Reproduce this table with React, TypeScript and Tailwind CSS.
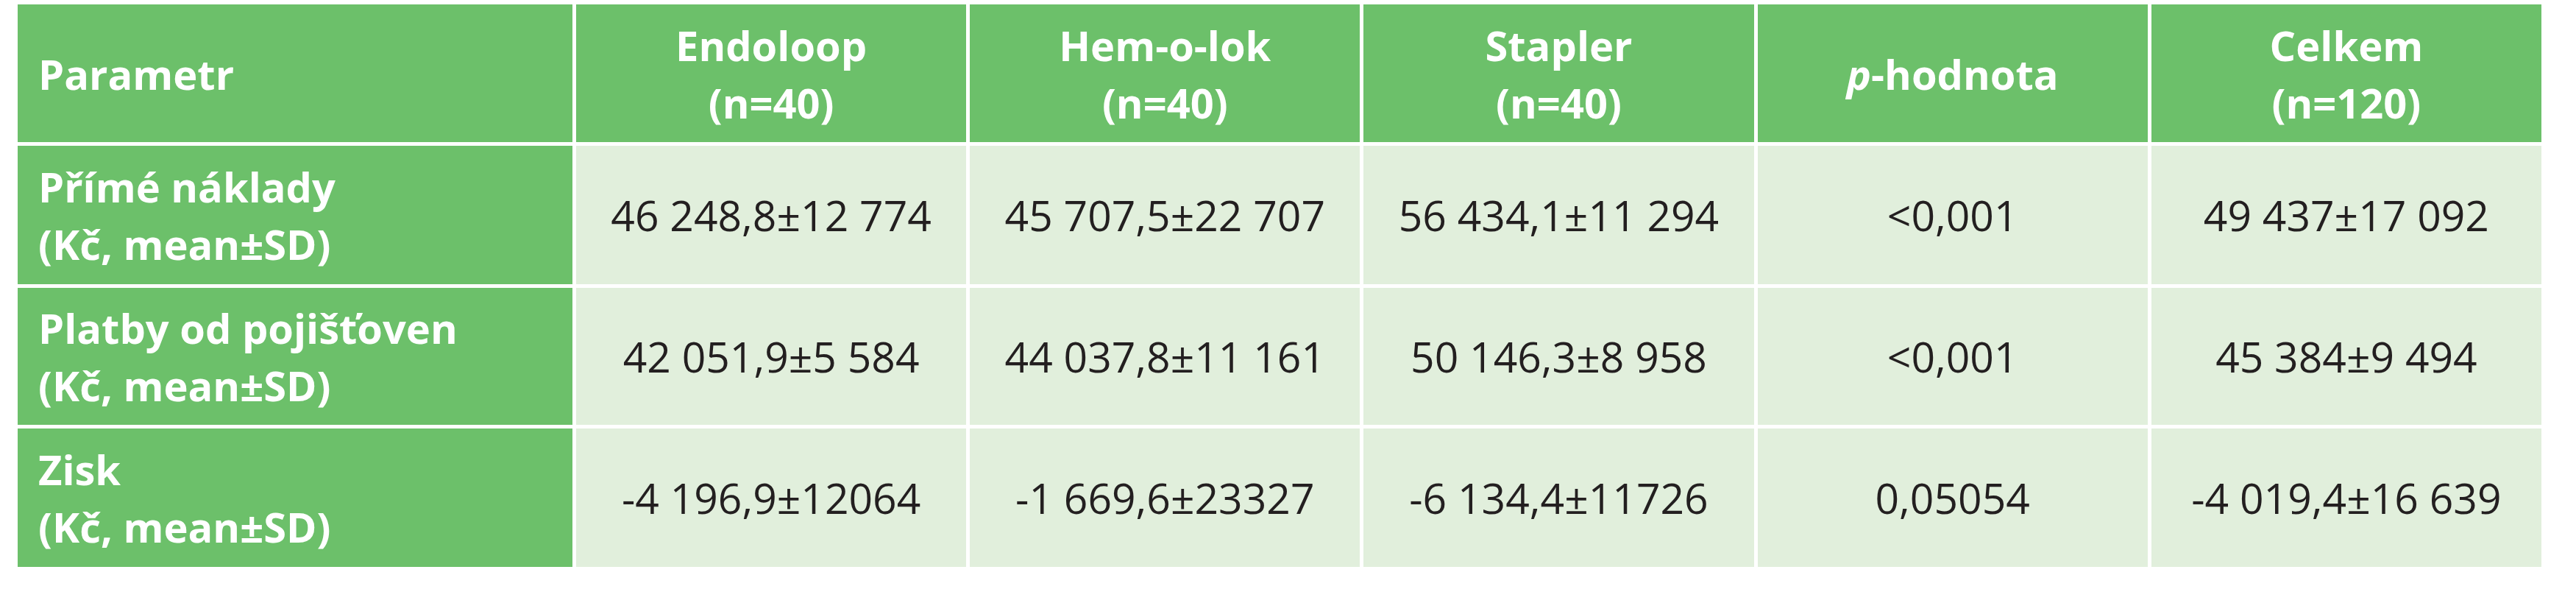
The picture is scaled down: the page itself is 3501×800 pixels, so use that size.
const headers: { title: React.ReactNode; sub?: string }[] = [
  { title: 'Endoloop', sub: '(n=40)' },
  { title: 'Hem-o-lok', sub: '(n=40)' },
  { title: 'Stapler', sub: '(n=40)' },
  {
    title: (
      <>
        <i>p</i>-hodnota
      </>
    ),
  },
  { title: 'Celkem', sub: '(n=120)' },
];

const rows = [
  {
    label: 'Přímé náklady',
    values: ['46 248,8±12 774', '45 707,5±22 707', '56 434,1±11 294', '<0,001', '49 437±17 092'],
  },
  {
    label: 'Platby od pojišťoven',
    values: ['42 051,9±5 584', '44 037,8±11 161', '50 146,3±8 958', '<0,001', '45 384±9 494'],
  },
  {
    label: 'Zisk',
    values: ['-4 196,9±12064', '-1 669,6±23327', '-6 134,4±11726', '0,05054', '-4 019,4±16 639'],
  },
];

export default function App() {
  return (
    <div className="h-[800px] w-[3501px] bg-white pl-[24px] pt-[6px] font-['Open_Sans',sans-serif]">
      <div className="grid w-[3430px] grid-cols-[754px_repeat(5,1fr)] grid-rows-[187px_188px_186px_188px] gap-[5px]">
        {/* header row */}
        <div className="flex items-center bg-[#6cc06a] pl-[28px] text-[56px] font-bold leading-[78px] text-white">
          Parametr
        </div>
        {headers.map((h, i) => (
          <div
            key={i}
            className="flex flex-col items-center justify-center bg-[#6cc06a] text-center text-[56px] font-bold leading-[78px] text-white"
          >
            <span>{h.title}</span>
            {h.sub && <span>{h.sub}</span>}
          </div>
        ))}

        {rows.map((row) => (
          <>
            <div
              key={row.label}
              className="flex flex-col justify-center bg-[#6cc06a] pl-[28px] text-[56px] font-bold leading-[78px] text-white"
            >
              <span>{row.label}</span>
              <span>(Kč, mean±SD)</span>
            </div>
            {row.values.map((v, i) => (
              <div
                key={row.label + i}
                className="flex items-center justify-center bg-[#e1efdc] text-[57px] leading-none text-[#231f20]"
              >
                {v}
              </div>
            ))}
          </>
        ))}
      </div>
    </div>
  );
}
